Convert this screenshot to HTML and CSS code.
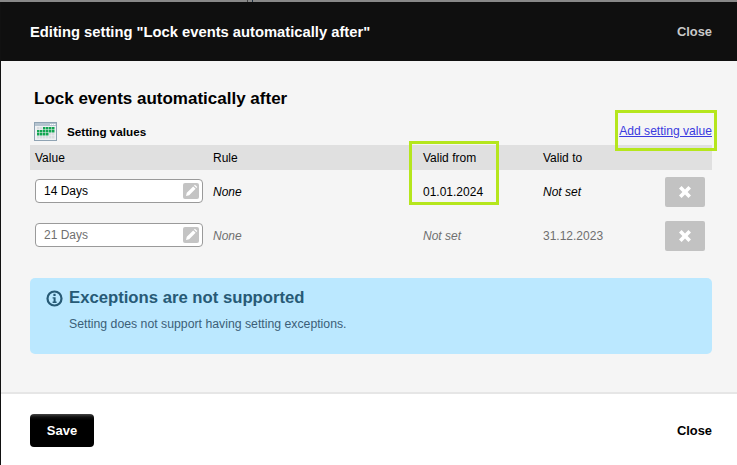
FILE: index.html
```html
<!DOCTYPE html>
<html lang="en">
<head>
<meta charset="utf-8">
<title>Editing setting</title>
<link rel="stylesheet" href="styles.css">
</head>
<body>
<div class="dialog">
  <div class="strip"><span class="tick tick-a"></span><span class="tick tick-b"></span></div>
  <header class="head">
    <h1 class="head-title">Editing setting "Lock events automatically after"</h1>
    <a class="head-close">Close</a>
  </header>
  <main class="content">
    <h2 class="setting-name">Lock events automatically after</h2>
    <div class="section-row">
      <svg class="cal" width="23" height="19" viewBox="0 0 23 19" aria-hidden="true">
        <rect x="0.5" y="0.5" width="22" height="18" fill="#eef1f3" stroke="#8fa3b3"/>
        <rect x="1" y="1" width="21" height="3" fill="#b4c3cf"/>
        <rect x="16" y="2" width="1.5" height="1" fill="#fff"/><rect x="18" y="2" width="1.5" height="1" fill="#fff"/><rect x="20" y="2" width="1.5" height="1" fill="#fff"/>
        <g fill="#d9dde0">
          <rect x="3" y="5" width="2.5" height="2.5"/><rect x="6" y="5" width="2.5" height="2.5"/>
          <rect x="3" y="14" width="2.5" height="2.5"/><rect x="6" y="14" width="2.5" height="2.5"/><rect x="9" y="14" width="2.5" height="2.5"/><rect x="12" y="14" width="2.5" height="2.5"/><rect x="15" y="14" width="2.5" height="2.5"/><rect x="18" y="14" width="2.5" height="2.5"/>
          <rect x="15" y="11" width="2.5" height="2.5"/><rect x="18" y="11" width="2.5" height="2.5"/>
        </g>
        <g fill="#12a550">
          <rect x="9" y="5" width="2.5" height="2.5"/><rect x="12" y="5" width="2.5" height="2.5"/><rect x="15" y="5" width="2.5" height="2.5"/><rect x="18" y="5" width="2.5" height="2.5"/>
          <rect x="3" y="8" width="2.5" height="2.5"/><rect x="6" y="8" width="2.5" height="2.5"/><rect x="9" y="8" width="2.5" height="2.5"/><rect x="12" y="8" width="2.5" height="2.5"/><rect x="15" y="8" width="2.5" height="2.5"/><rect x="18" y="8" width="2.5" height="2.5"/>
          <rect x="3" y="11" width="2.5" height="2.5"/><rect x="6" y="11" width="2.5" height="2.5"/><rect x="9" y="11" width="2.5" height="2.5"/><rect x="12" y="11" width="2.5" height="2.5"/>
        </g>
      </svg>
      <span class="section-label">Setting values</span>
      <a class="add-link">Add setting value</a>
    </div>
    <div class="table">
      <div class="row row-head">
        <div class="c-value">Value</div>
        <div>Rule</div>
        <div>Valid from</div>
        <div>Valid to</div>
        <div></div>
      </div>
      <div class="row">
        <div class="field"><span>14 Days</span>
          <span class="pencil"><svg width="16" height="16" viewBox="0 0 16 16" aria-hidden="true"><path d="M3 13l.8-3.2 6.4-6.4 2.4 2.4-6.4 6.4zM11 2.6l.9-.9 2.4 2.4-.9.9z" fill="#fff"/></svg></span>
        </div>
        <div class="em">None</div>
        <div>01.01.2024</div>
        <div class="em">Not set</div>
        <div class="c-del"><button class="del" type="button"><svg width="14" height="14" viewBox="0 0 14 14" aria-hidden="true"><path d="M3.6 1L7 4.4 10.4 1 13 3.6 9.6 7 13 10.4 10.4 13 7 9.6 3.6 13 1 10.4 4.4 7 1 3.6z" fill="#fff"/></svg></button></div>
      </div>
      <div class="row row-muted">
        <div class="field"><span>21 Days</span>
          <span class="pencil"><svg width="16" height="16" viewBox="0 0 16 16" aria-hidden="true"><path d="M3 13l.8-3.2 6.4-6.4 2.4 2.4-6.4 6.4zM11 2.6l.9-.9 2.4 2.4-.9.9z" fill="#fff"/></svg></span>
        </div>
        <div class="em">None</div>
        <div class="em">Not set</div>
        <div>31.12.2023</div>
        <div class="c-del"><button class="del" type="button"><svg width="14" height="14" viewBox="0 0 14 14" aria-hidden="true"><path d="M3.6 1L7 4.4 10.4 1 13 3.6 9.6 7 13 10.4 10.4 13 7 9.6 3.6 13 1 10.4 4.4 7 1 3.6z" fill="#fff"/></svg></button></div>
      </div>
    </div>
    <section class="notice">
      <div class="notice-head">
        <svg class="info" width="17" height="17" viewBox="0 0 17 17" aria-hidden="true">
          <circle cx="8.5" cy="8.5" r="7" fill="none" stroke="#275a76" stroke-width="2.2"/>
          <rect x="7.4" y="3.8" width="2.2" height="2.2" fill="#275a76"/>
          <path d="M6.6 7.2h3v4.4h1v1.3H6.6v-1.3h1v-3.1h-1z" fill="#275a76"/>
        </svg>
        <h3 class="notice-title">Exceptions are not supported</h3>
      </div>
      <p class="notice-text">Setting does not support having setting exceptions.</p>
    </section>
    <span class="mark mark-from"></span>
    <span class="mark mark-add"></span>
  </main>
  <footer class="foot">
    <button class="save" type="button">Save</button>
    <a class="foot-close">Close</a>
  </footer>
</div>
</body>
</html>
```
FILE: styles.css
```css
* { box-sizing: border-box; }
html, body { margin: 0; height: 100%; }
body { font-family: "Liberation Sans", Arial, sans-serif; font-size: 12px; color: #000; overflow: hidden; }
.dialog { width: 737px; height: 465px; display: flex; flex-direction: column; border-left: 1px solid #111; background: #fff; position: relative; }
.strip { height: 2px; background: #888; margin-left: -1px; flex: none; position: relative; }
.tick { position: absolute; top: 0; width: 1px; height: 2px; background: #444; }
.tick-a { left: 247px; }
.tick-b { left: 252px; background: #234; }
.head { height: 59px; flex: none; background: #0f0f0f; display: flex; align-items: center; justify-content: space-between; padding: 0 25px 0 29px; }
.head-title { margin: 0; font-size: 14.75px; font-weight: bold; color: #fff; }
.head-close { color: #c9c9c9; font-size: 12.9px; font-weight: bold; }
.content { flex: 1; background: #f5f5f5; padding: 28px 25px 0 29px; position: relative; border-bottom: 2px solid #e6e6e6; }
.setting-name { margin: 0; font-size: 17px; line-height: 19px; font-weight: bold; padding-left: 4px; }
.section-row { display: flex; align-items: center; height: 26px; margin-top: 10px; padding-left: 4px; }
.cal { flex: none; }
.section-label { margin-left: 10px; font-size: 11.7px; font-weight: bold; }
.add-link { margin-left: auto; color: #3a3adf; text-decoration: underline; font-size: 12.1px; }
.table { display: flex; flex-direction: column; margin-top: 1px; }
.row { display: grid; grid-template-columns: 183px 210px 120px 122px 47px; align-items: center; height: 44px; }
.row-head { height: 25px; background: #e0e0e0; }
.c-value { padding-left: 5px; }
.row-muted { color: #6f6f6f; }
.em { font-style: italic; }
.field { margin: 0 0 2px 5px; width: 168px; height: 24px; background: #fff; border: 1px solid #9a9a9a; border-radius: 4px; display: flex; align-items: center; justify-content: space-between; padding: 0 3px 0 8px; }
.pencil { width: 16px; height: 16px; background: #c4c4c4; border-radius: 2px; display: block; }
.pencil svg { display: block; }
.c-del { display: flex; }
.del { width: 40px; height: 30px; padding: 0; border: 0; border-radius: 2px; background: #c2c2c2; display: flex; align-items: center; justify-content: center; }
.notice { margin-top: 20px; width: 682px; height: 76px; background: #bbe8ff; border-radius: 5px; padding: 10px 16px; color: #275a76; }
.notice-head { display: flex; align-items: center; gap: 6px; }
.info { flex: none; }
.notice-title { margin: 0; font-size: 16.7px; line-height: 20px; font-weight: bold; }
.notice-text { margin: 9px 0 0 23px; font-size: 12.27px; color: #3c5f78; }
.mark { position: absolute; border: 3px solid #b5e61d; pointer-events: none; }
.mark-from { left: 408px; top: 80px; width: 90px; height: 64px; }
.mark-add { left: 614px; top: 49px; width: 102px; height: 41px; }
.foot { height: 71px; flex: none; display: flex; align-items: center; justify-content: space-between; padding: 2px 25px 0 29px; background: #fff; }
.save { width: 64px; height: 33px; border: 0; border-radius: 4px; background: linear-gradient(#444 0, #111 3px, #000 6px); color: #fff; font: bold 13px "Liberation Sans", Arial, sans-serif; padding: 0; }
.foot-close { font-size: 12.9px; font-weight: bold; }
```
